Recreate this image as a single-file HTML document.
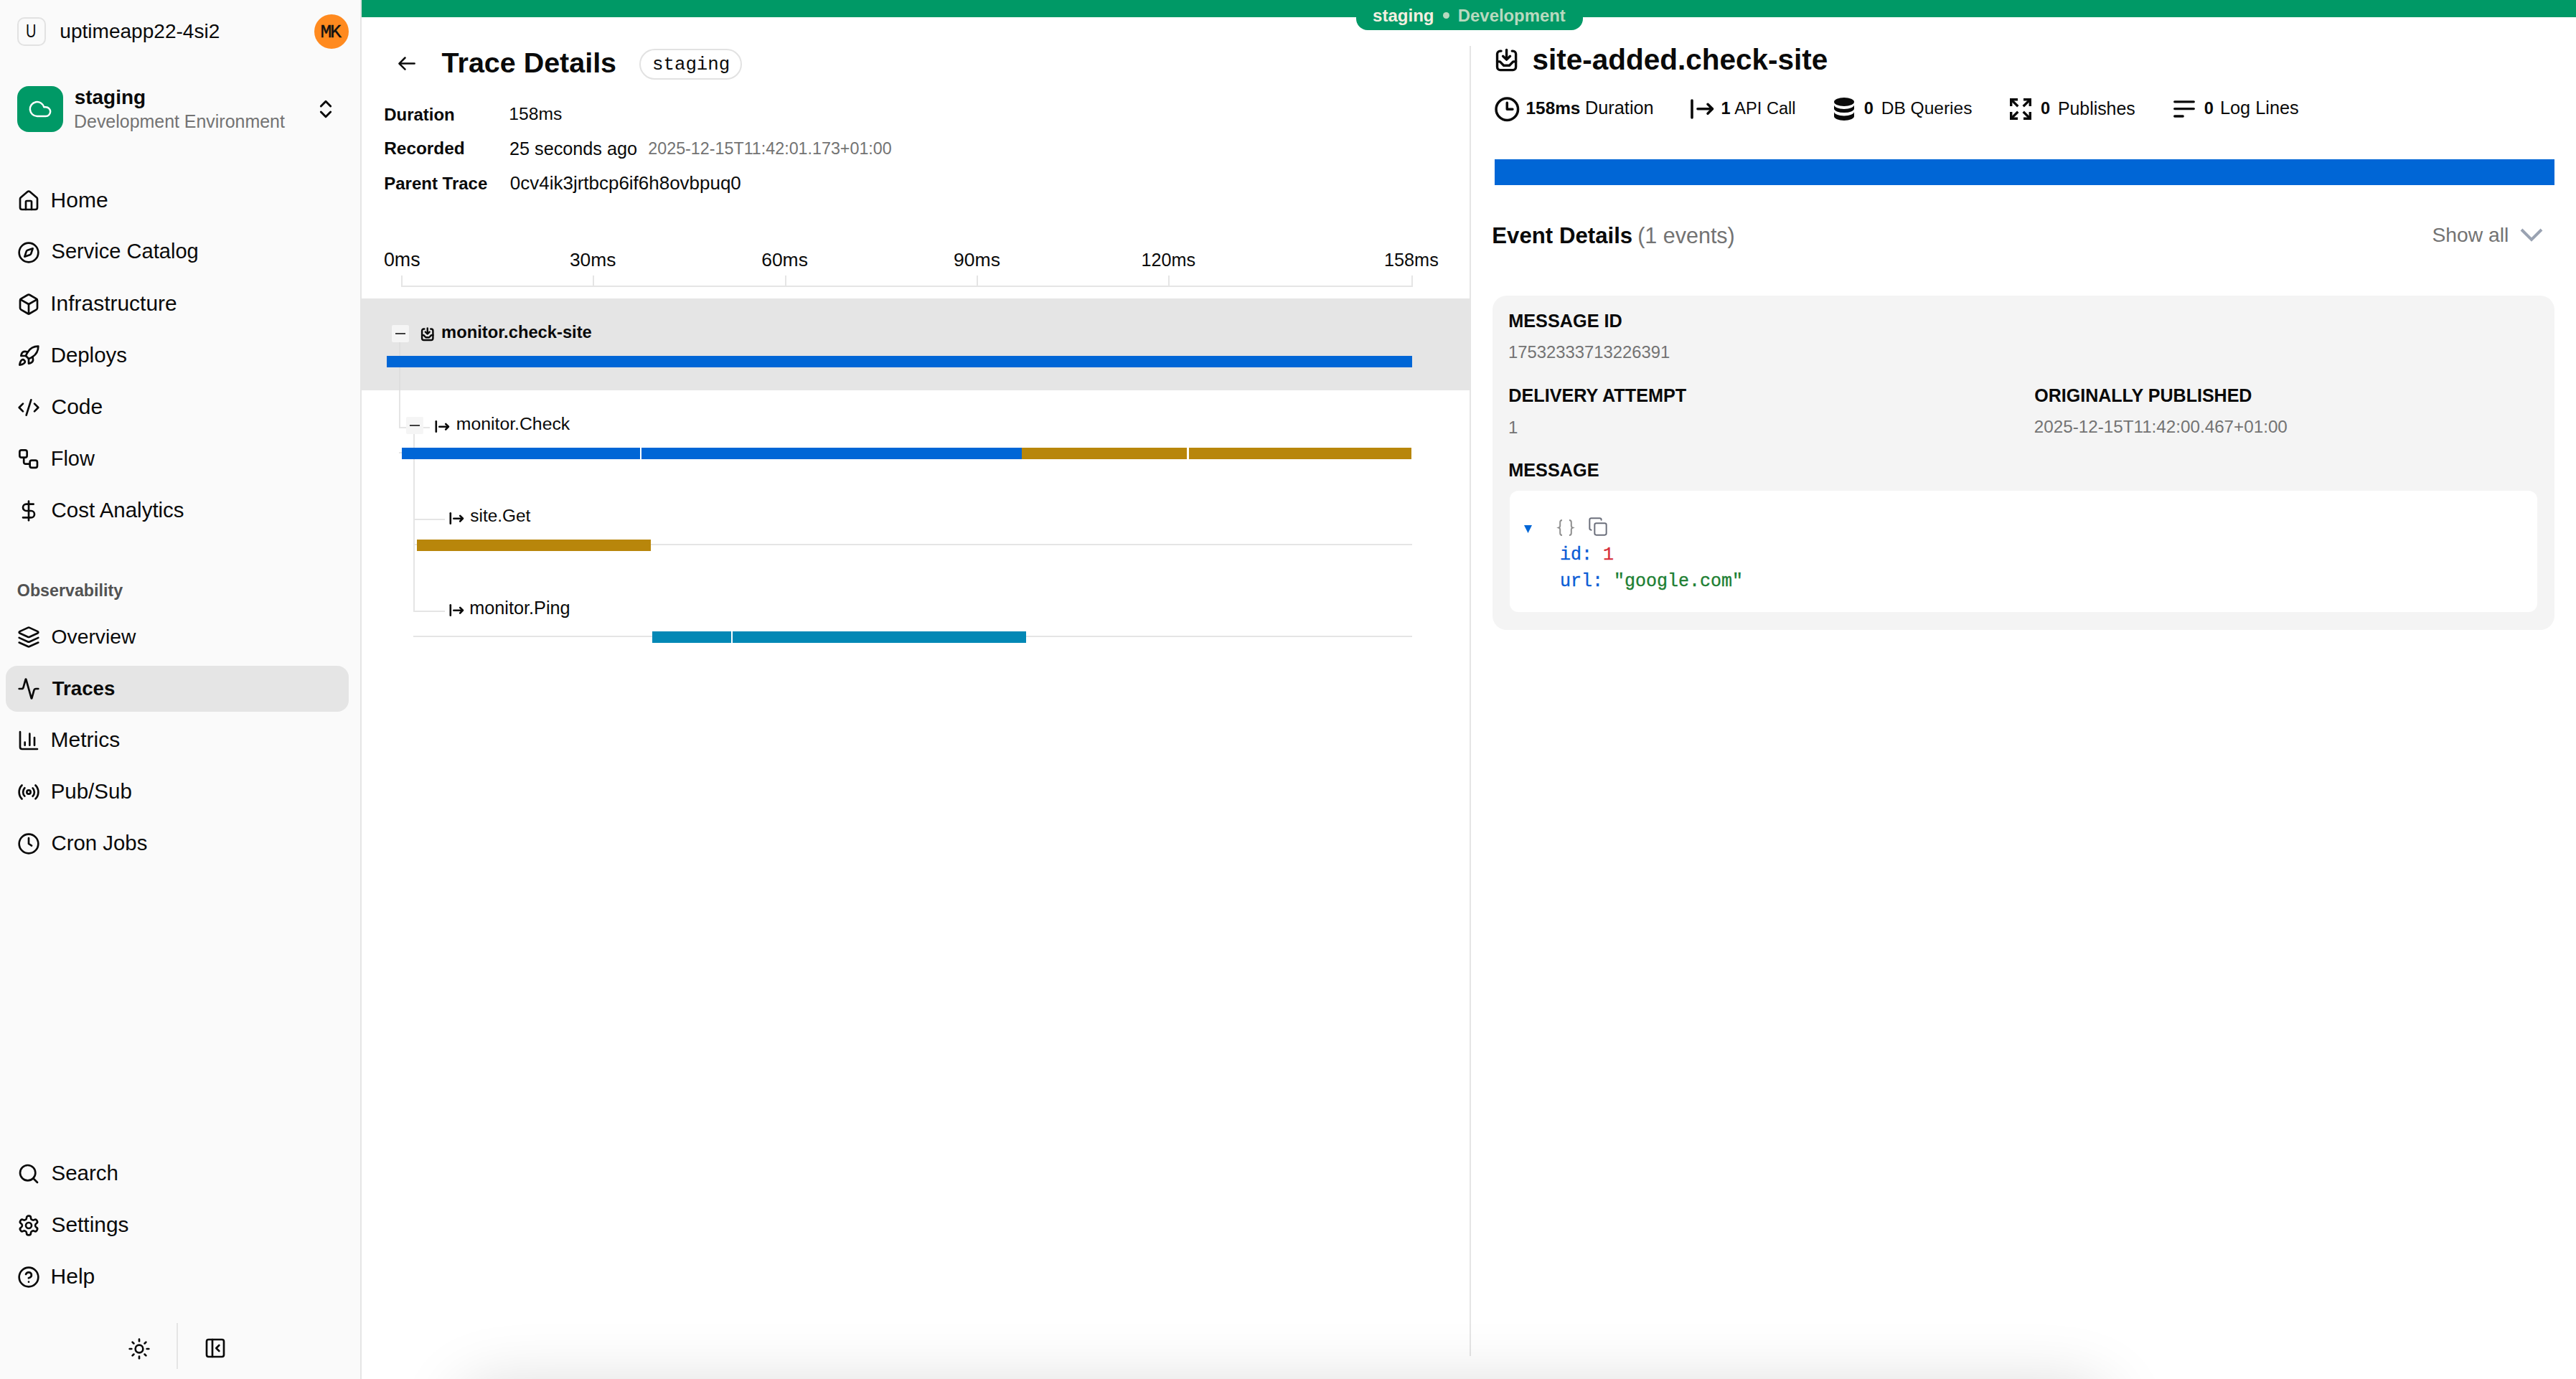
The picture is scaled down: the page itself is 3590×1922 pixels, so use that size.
<!DOCTYPE html>
<html><head><meta charset="utf-8"><title>Trace Details</title>
<style>
html,body{margin:0;padding:0;width:3590px;height:1922px;overflow:hidden;background:#fff;}
.t{position:absolute;white-space:pre;}
.r{position:absolute;}
.i{position:absolute;overflow:visible;}
</style></head><body>
<div style="position:relative;width:3590px;height:1922px;overflow:hidden;background:#fff">
<div class="r" style="left:0px;top:0px;width:502px;height:1922px;background:#fafafa;"></div>
<div class="r" style="left:502px;top:0px;width:2px;height:1922px;background:#e5e5e5;"></div>
<div class="r" style="left:24px;top:24px;width:40px;height:40px;background:#fafafa;box-sizing:border-box;border:2px solid #e2e2e2;border-radius:10px;"></div>
<div class="t" style="left:36.3px;top:31.17px;font:400 25px/25px 'Liberation Sans', sans-serif;color:#0a0a0a;transform:scaleX(0.8);transform-origin:0 0;">U</div>
<div class="t" style="left:83.32px;top:29.79px;font:400 28.06px/28.06px 'Liberation Sans', sans-serif;color:#0a0a0a;">uptimeapp22-4si2</div>
<div class="r" style="left:438px;top:20px;width:48px;height:48px;background:#ff8a1f;border-radius:50%;"></div>
<div class="t" style="left:446.5px;top:31.73px;font:400 26.5px/26.5px 'Liberation Mono', monospace;color:#111111;letter-spacing:-2.3px;-webkit-text-stroke:0.4px #111;">MK</div>
<div class="r" style="left:24px;top:120px;width:64px;height:64px;background:#009966;border-radius:16px;"></div>
<svg class="i" style="left:39px;top:135px;" width="34" height="34" viewBox="0 0 24 24" fill="none" stroke="#fff" stroke-width="1.75" stroke-linecap="round" stroke-linejoin="round"><path d="M17.5 19H9a7 7 0 1 1 6.71-9h1.79a4.5 4.5 0 1 1 0 9Z"/></svg>
<div class="t" style="left:103.63px;top:121.96px;font:700 27.97px/27.97px 'Liberation Sans', sans-serif;color:#0a0a0a;">staging</div>
<div class="t" style="left:103.00px;top:157.02px;font:400 24.95px/24.95px 'Liberation Sans', sans-serif;color:#737373;">Development Environment</div>
<svg class="i" style="left:438px;top:136px;" width="32" height="32" viewBox="0 0 24 24" fill="none" stroke="#0a0a0a" stroke-width="2.2" stroke-linecap="round" stroke-linejoin="round"><path d="m7 15 5 5 5-5"/><path d="m7 9 5-5 5 5"/></svg>
<svg class="i" style="left:24px;top:264px;" width="32" height="32" viewBox="0 0 24 24" fill="none" stroke="#0a0a0a" stroke-width="2" stroke-linecap="round" stroke-linejoin="round"><path d="M15 21v-8a1 1 0 0 0-1-1h-4a1 1 0 0 0-1 1v8"/><path d="M3 10a2 2 0 0 1 .709-1.528l7-5.999a2 2 0 0 1 2.582 0l7 5.999A2 2 0 0 1 21 10v9a2 2 0 0 1-2 2H5a2 2 0 0 1-2-2z"/></svg>
<div class="t" style="left:70.60px;top:263.65px;font:400 30.00px/30.00px 'Liberation Sans', sans-serif;color:#0a0a0a;">Home</div>
<svg class="i" style="left:24px;top:336px;" width="32" height="32" viewBox="0 0 24 24" fill="none" stroke="#0a0a0a" stroke-width="2" stroke-linecap="round" stroke-linejoin="round"><circle cx="12" cy="12" r="10"/><path d="m16.24 7.76-1.804 5.411a2 2 0 0 1-1.265 1.265L7.76 16.24l1.804-5.411a2 2 0 0 1 1.265-1.265z"/></svg>
<div class="t" style="left:71.55px;top:336.44px;font:400 29.07px/29.07px 'Liberation Sans', sans-serif;color:#0a0a0a;">Service Catalog</div>
<svg class="i" style="left:24px;top:408px;" width="32" height="32" viewBox="0 0 24 24" fill="none" stroke="#0a0a0a" stroke-width="2" stroke-linecap="round" stroke-linejoin="round"><path d="M21 8a2 2 0 0 0-1-1.73l-7-4a2 2 0 0 0-2 0l-7 4A2 2 0 0 0 3 8v8a2 2 0 0 0 1 1.73l7 4a2 2 0 0 0 2 0l7-4A2 2 0 0 0 21 16Z"/><path d="m3.3 7 8.7 5 8.7-5"/><path d="M12 22V12"/></svg>
<div class="t" style="left:70.30px;top:407.69px;font:400 29.95px/29.95px 'Liberation Sans', sans-serif;color:#0a0a0a;">Infrastructure</div>
<svg class="i" style="left:24px;top:480px;" width="32" height="32" viewBox="0 0 24 24" fill="none" stroke="#0a0a0a" stroke-width="2" stroke-linecap="round" stroke-linejoin="round"><path d="M4.5 16.5c-1.5 1.26-2 5-2 5s3.74-.5 5-2c.71-.84.7-2.13-.09-2.91a2.18 2.18 0 0 0-2.91-.09z"/><path d="m12 15-3-3a22 22 0 0 1 2-3.95A12.88 12.88 0 0 1 22 2c0 2.72-.78 7.5-6 11a22.35 22.35 0 0 1-4 2z"/><path d="M9 12H4s.55-3.03 2-4c1.62-1.08 5 0 5 0"/><path d="M12 15v5s3.03-.55 4-2c1.08-1.62 0-5 0-5"/></svg>
<div class="t" style="left:70.65px;top:480.13px;font:400 29.43px/29.43px 'Liberation Sans', sans-serif;color:#0a0a0a;">Deploys</div>
<svg class="i" style="left:24px;top:552px;" width="32" height="32" viewBox="0 0 24 24" fill="none" stroke="#0a0a0a" stroke-width="2" stroke-linecap="round" stroke-linejoin="round"><path d="m18 16 4-4-4-4"/><path d="m6 8-4 4 4 4"/><path d="m14.5 4-5 16"/></svg>
<div class="t" style="left:71.50px;top:551.65px;font:400 30.00px/30.00px 'Liberation Sans', sans-serif;color:#0a0a0a;">Code</div>
<svg class="i" style="left:26px;top:626px;" width="28" height="28" viewBox="0 0 28 28"><g fill="none" stroke="#0a0a0a" stroke-width="2.7" stroke-linecap="round" stroke-linejoin="round"><rect x="1.35" y="1.35" width="10.3" height="10.3" rx="2.6"/><rect x="15.65" y="15.55" width="10.3" height="10.3" rx="2.6"/><path d="M7.2 12V18.2a2.5 2.5 0 0 0 2.5 2.5H15.6"/></g></svg>
<div class="t" style="left:70.68px;top:624.50px;font:400 29.00px/29.00px 'Liberation Sans', sans-serif;color:#0a0a0a;">Flow</div>
<svg class="i" style="left:24px;top:696px;" width="32" height="32" viewBox="0 0 24 24" fill="none" stroke="#0a0a0a" stroke-width="2" stroke-linecap="round" stroke-linejoin="round"><line x1="12" x2="12" y1="2" y2="22"/><path d="M17 5H9.5a3.5 3.5 0 0 0 0 7h5a3.5 3.5 0 0 1 0 7H6"/></svg>
<div class="t" style="left:71.53px;top:696.09px;font:400 29.48px/29.48px 'Liberation Sans', sans-serif;color:#0a0a0a;">Cost Analytics</div>
<div class="t" style="left:23.82px;top:812.35px;font:700 23.25px/23.25px 'Liberation Sans', sans-serif;color:#525252;">Observability</div>
<div class="r" style="left:8px;top:928px;width:478px;height:64px;background:#e5e5e5;border-radius:16px;"></div>
<svg class="i" style="left:24px;top:872px;" width="32" height="32" viewBox="0 0 24 24" fill="none" stroke="#0a0a0a" stroke-width="2" stroke-linecap="round" stroke-linejoin="round"><path d="m12.83 2.18a2 2 0 0 0-1.66 0L2.6 6.08a1 1 0 0 0 0 1.83l8.58 3.91a2 2 0 0 0 1.66 0l8.58-3.9a1 1 0 0 0 0-1.83Z"/><path d="m22 17.65-9.17 4.16a2 2 0 0 1-1.66 0L2 17.65"/><path d="m22 12.65-9.17 4.16a2 2 0 0 1-1.66 0L2 12.65"/></svg>
<div class="t" style="left:71.59px;top:873.13px;font:400 28.25px/28.25px 'Liberation Sans', sans-serif;color:#0a0a0a;">Overview</div>
<svg class="i" style="left:24px;top:944px;" width="32" height="32" viewBox="0 0 24 24" fill="none" stroke="#0a0a0a" stroke-width="2" stroke-linecap="round" stroke-linejoin="round"><path d="M22 12h-2.48a2 2 0 0 0-1.93 1.46l-2.35 8.36a.25.25 0 0 1-.48 0L9.24 2.18a.25.25 0 0 0-.48 0l-2.35 8.36A2 2 0 0 1 4.49 12H2"/></svg>
<div class="t" style="left:72.72px;top:945.64px;font:700 27.64px/27.64px 'Liberation Sans', sans-serif;color:#0a0a0a;">Traces</div>
<svg class="i" style="left:24px;top:1016px;" width="32" height="32" viewBox="0 0 24 24" fill="none" stroke="#0a0a0a" stroke-width="2" stroke-linecap="round" stroke-linejoin="round"><path d="M3 3v16a2 2 0 0 0 2 2h16"/><path d="M18 17V9"/><path d="M13 17V5"/><path d="M8 17v-3"/></svg>
<div class="t" style="left:70.60px;top:1015.65px;font:400 30.00px/30.00px 'Liberation Sans', sans-serif;color:#0a0a0a;">Metrics</div>
<svg class="i" style="left:24px;top:1088px;" width="32" height="32" viewBox="0 0 24 24" fill="none" stroke="#0a0a0a" stroke-width="2" stroke-linecap="round" stroke-linejoin="round"><path d="M4.9 19.1C1 15.2 1 8.8 4.9 4.9"/><path d="M7.8 16.2c-2.3-2.3-2.3-6.1 0-8.5"/><circle cx="12" cy="12" r="2"/><path d="M16.2 7.8c2.3 2.3 2.3 6.1 0 8.5"/><path d="M19.1 4.9C23 8.8 23 15.1 19.1 19"/></svg>
<div class="t" style="left:70.64px;top:1088.06px;font:400 29.51px/29.51px 'Liberation Sans', sans-serif;color:#0a0a0a;">Pub/Sub</div>
<svg class="i" style="left:24px;top:1160px;" width="32" height="32" viewBox="0 0 24 24" fill="none" stroke="#0a0a0a" stroke-width="2" stroke-linecap="round" stroke-linejoin="round"><circle cx="12" cy="12" r="10"/><polyline points="12 6 12 12 15 14"/></svg>
<div class="t" style="left:71.53px;top:1160.19px;font:400 29.36px/29.36px 'Liberation Sans', sans-serif;color:#0a0a0a;">Cron Jobs</div>
<svg class="i" style="left:24px;top:1620px;" width="32" height="32" viewBox="0 0 24 24" fill="none" stroke="#0a0a0a" stroke-width="2" stroke-linecap="round" stroke-linejoin="round"><circle cx="11" cy="11" r="8"/><path d="m21 21-4.3-4.3"/></svg>
<div class="t" style="left:71.52px;top:1620.07px;font:400 29.51px/29.51px 'Liberation Sans', sans-serif;color:#0a0a0a;">Search</div>
<svg class="i" style="left:24px;top:1692px;" width="32" height="32" viewBox="0 0 24 24" fill="none" stroke="#0a0a0a" stroke-width="2" stroke-linecap="round" stroke-linejoin="round"><path d="M12.22 2h-.44a2 2 0 0 0-2 2v.18a2 2 0 0 1-1 1.73l-.43.25a2 2 0 0 1-2 0l-.15-.08a2 2 0 0 0-2.73.73l-.22.38a2 2 0 0 0 .73 2.73l.15.1a2 2 0 0 1 1 1.72v.51a2 2 0 0 1-1 1.74l-.15.09a2 2 0 0 0-.73 2.73l.22.38a2 2 0 0 0 2.73.73l.15-.08a2 2 0 0 1 2 0l.43.25a2 2 0 0 1 1 1.73V20a2 2 0 0 0 2 2h.44a2 2 0 0 0 2-2v-.18a2 2 0 0 1 1-1.73l.43-.25a2 2 0 0 1 2 0l.15.08a2 2 0 0 0 2.73-.73l.22-.39a2 2 0 0 0-.73-2.73l-.15-.08a2 2 0 0 1-1-1.74v-.5a2 2 0 0 1 1-1.74l.15-.09a2 2 0 0 0 .73-2.73l-.22-.38a2 2 0 0 0-2.73-.73l-.15.08a2 2 0 0 1-2 0l-.43-.25a2 2 0 0 1-1-1.73V4a2 2 0 0 0-2-2z"/><circle cx="12" cy="12" r="3"/></svg>
<div class="t" style="left:71.51px;top:1691.75px;font:400 29.89px/29.89px 'Liberation Sans', sans-serif;color:#0a0a0a;">Settings</div>
<svg class="i" style="left:24px;top:1764px;" width="32" height="32" viewBox="0 0 24 24" fill="none" stroke="#0a0a0a" stroke-width="2" stroke-linecap="round" stroke-linejoin="round"><circle cx="12" cy="12" r="10"/><path d="M9.09 9a3 3 0 0 1 5.83 1c0 2-3 3-3 3"/><path d="M12 17h.01"/></svg>
<div class="t" style="left:70.60px;top:1763.65px;font:400 30.00px/30.00px 'Liberation Sans', sans-serif;color:#0a0a0a;">Help</div>
<svg class="i" style="left:178px;top:1864px;" width="32" height="32" viewBox="0 0 24 24" fill="none" stroke="#0a0a0a" stroke-width="2" stroke-linecap="round" stroke-linejoin="round"><circle cx="12" cy="12" r="4"/><path d="M12 2v2"/><path d="M12 20v2"/><path d="m4.93 4.93 1.41 1.41"/><path d="m17.66 17.66 1.41 1.41"/><path d="M2 12h2"/><path d="M20 12h2"/><path d="m6.34 17.66-1.41 1.41"/><path d="m19.07 4.93-1.41 1.41"/></svg>
<div class="r" style="left:246px;top:1844px;width:2px;height:64px;background:#e5e5e5;"></div>
<svg class="i" style="left:284px;top:1863px;" width="32" height="32" viewBox="0 0 24 24" fill="none" stroke="#0a0a0a" stroke-width="2" stroke-linecap="round" stroke-linejoin="round"><rect width="18" height="18" x="3" y="3" rx="2"/><path d="M9 3v18"/><path d="m16 15-3-3 3-3"/></svg>
<div class="r" style="left:504px;top:0px;width:3086px;height:1922px;background:#ffffff;"></div>
<div class="r" style="left:504px;top:0px;width:3086px;height:24px;background:#009966;"></div>
<div class="r" style="left:1890px;top:0px;width:316px;height:42px;background:#009966;border-radius:0 0 16px 16px;"></div>
<div class="t" style="left:1913.04px;top:10.17px;font:700 24.06px/24.06px 'Liberation Sans', sans-serif;color:#f3efe0;">staging</div>
<div class="r" style="left:2011px;top:17px;width:9px;height:9px;background:#b6d9bf;border-radius:50%;"></div>
<div class="t" style="left:2031.83px;top:10.32px;font:700 23.89px/23.89px 'Liberation Sans', sans-serif;color:#b9d9bf;">Development</div>
<svg class="i" style="left:553px;top:76px;" width="28" height="26" viewBox="0 0 28 26"><g fill="none" stroke="#0a0a0a" stroke-width="2.5" stroke-linecap="round" stroke-linejoin="round"><path d="M4.4 12.6H24.6"/><path d="M11.5 4.5 3.4 12.6 11.5 20.7"/></g></svg>
<div class="t" style="left:615.61px;top:67.66px;font:700 39.46px/39.46px 'Liberation Sans', sans-serif;color:#0a0a0a;">Trace Details</div>
<div class="r" style="left:891px;top:68px;width:143px;height:43px;background:#fff;box-sizing:border-box;border:2px solid #e2e2e2;border-radius:22px;"></div>
<div class="t" style="left:908.94px;top:78.26px;font:400 25.81px/25.81px 'Liberation Mono', monospace;color:#0a0a0a;">staging</div>
<div class="t" style="left:535.22px;top:147.86px;font:700 23.96px/23.96px 'Liberation Sans', sans-serif;color:#0a0a0a;">Duration</div>
<div class="t" style="left:709.28px;top:147.27px;font:400 24.65px/24.65px 'Liberation Sans', sans-serif;color:#0a0a0a;">158ms</div>
<div class="t" style="left:535.19px;top:195.37px;font:700 24.41px/24.41px 'Liberation Sans', sans-serif;color:#0a0a0a;">Recorded</div>
<div class="t" style="left:709.99px;top:194.69px;font:400 25.22px/25.22px 'Liberation Sans', sans-serif;color:#0a0a0a;">25 seconds ago</div>
<div class="t" style="left:903.34px;top:196.32px;font:400 23.29px/23.29px 'Liberation Sans', sans-serif;color:#737373;">2025-12-15T11:42:01.173+01:00</div>
<div class="t" style="left:535.22px;top:243.82px;font:700 24.00px/24.00px 'Liberation Sans', sans-serif;color:#0a0a0a;">Parent Trace</div>
<div class="t" style="left:710.86px;top:242.15px;font:400 25.98px/25.98px 'Liberation Sans', sans-serif;color:#0a0a0a;">0cv4ik3jrtbcp6if6h8ovbpuq0</div>
<div class="r" style="left:559px;top:398px;width:1410px;height:2px;background:#e5e5e5;"></div>
<div class="r" style="left:559px;top:384px;width:2px;height:15px;background:#e5e5e5;"></div>
<div class="t" style="left:534.93px;top:348.86px;font:400 26.80px/26.80px 'Liberation Sans', sans-serif;color:#0a0a0a;">0ms</div>
<div class="r" style="left:826px;top:384px;width:2px;height:15px;background:#e5e5e5;"></div>
<div class="t" style="left:793.95px;top:349.22px;font:400 26.37px/26.37px 'Liberation Sans', sans-serif;color:#0a0a0a;">30ms</div>
<div class="r" style="left:1094px;top:384px;width:2px;height:15px;background:#e5e5e5;"></div>
<div class="t" style="left:1061.18px;top:349.12px;font:400 26.48px/26.48px 'Liberation Sans', sans-serif;color:#0a0a0a;">60ms</div>
<div class="r" style="left:1361px;top:384px;width:2px;height:15px;background:#e5e5e5;"></div>
<div class="t" style="left:1329.07px;top:349.09px;font:400 26.53px/26.53px 'Liberation Sans', sans-serif;color:#0a0a0a;">90ms</div>
<div class="r" style="left:1628px;top:384px;width:2px;height:15px;background:#e5e5e5;"></div>
<div class="t" style="left:1590.49px;top:350.24px;font:400 25.16px/25.16px 'Liberation Sans', sans-serif;color:#0a0a0a;">120ms</div>
<div class="r" style="left:1967px;top:384px;width:2px;height:15px;background:#e5e5e5;"></div>
<div class="t" style="left:1928.98px;top:350.16px;font:400 25.26px/25.26px 'Liberation Sans', sans-serif;color:#0a0a0a;">158ms</div>
<div class="r" style="left:504px;top:416px;width:1545px;height:128px;background:#e5e5e5;"></div>
<div class="r" style="left:556px;top:477px;width:2px;height:120px;background:#e5e5e5;"></div>
<div class="r" style="left:556px;top:477px;width:2px;height:67px;background:#dedede;"></div>
<div class="r" style="left:556px;top:595px;width:43px;height:2px;background:#e5e5e5;"></div>
<div class="r" style="left:576px;top:605px;width:2px;height:248px;background:#e5e5e5;"></div>
<div class="r" style="left:576px;top:723px;width:44px;height:2px;background:#e5e5e5;"></div>
<div class="r" style="left:576px;top:851px;width:44px;height:2px;background:#e5e5e5;"></div>
<div class="r" style="left:546px;top:453px;width:24px;height:24px;background:#f5f5f5;border-radius:2px;"></div>
<div class="r" style="left:551px;top:464px;width:14px;height:2px;background:#404040;"></div>
<div class="r" style="left:566px;top:581px;width:24px;height:24px;background:#f5f5f5;border-radius:2px;"></div>
<div class="r" style="left:571px;top:592px;width:14px;height:2px;background:#404040;"></div>
<svg class="i" style="left:586.3px;top:455.5px;" width="20" height="20" viewBox="0 0 24 24" fill="none" stroke="#0a0a0a" stroke-width="2.9" stroke-linecap="round" stroke-linejoin="round"><path d="M6.4 2.9H5.5a3 3 0 0 0-3 3V18.6a3 3 0 0 0 3 3H17.9a3 3 0 0 0 3-3V5.9a3 3 0 0 0-3-3H17.1"/><path d="M11.7 1.8V10.6"/><path d="M8.2 7.9 11.7 11.4 15.2 7.9"/><path d="M2.5 13.3H5.2L8.9 17.1H14.5L18.2 13.3H20.9"/></svg>
<div class="t" style="left:615.09px;top:452.44px;font:700 23.74px/23.74px 'Liberation Sans', sans-serif;color:#0a0a0a;">monitor.check-site</div>
<div class="r" style="left:539px;top:496px;width:1429px;height:16px;background:#0066d6;"></div>
<svg class="i" style="left:605px;top:584.5px;" width="24" height="20" viewBox="0 0 24 20"><g fill="none" stroke="#0a0a0a" stroke-width="2.6" stroke-linecap="round" stroke-linejoin="round"><path d="M2.8 2.3V16.8"/><path d="M7.3 9.7H19.6"/><path d="M16.2 5.9 20 9.7 16.2 13.5"/></g></svg>
<div class="t" style="left:635.76px;top:579.04px;font:400 24.80px/24.80px 'Liberation Sans', sans-serif;color:#0a0a0a;">monitor.Check</div>
<div class="r" style="left:556px;top:630px;width:4px;height:2px;background:#e5e5e5;"></div>
<div class="r" style="left:560px;top:624px;width:1407px;height:16px;background:#0066d6;"></div>
<div class="r" style="left:892px;top:624px;width:2px;height:16px;background:#ffffff;"></div>
<div class="r" style="left:1424px;top:624px;width:543px;height:16px;background:#b8860b;"></div>
<div class="r" style="left:1654px;top:624px;width:3px;height:16px;background:#ffffff;"></div>
<svg class="i" style="left:625px;top:712.5px;" width="24" height="20" viewBox="0 0 24 20"><g fill="none" stroke="#0a0a0a" stroke-width="2.6" stroke-linecap="round" stroke-linejoin="round"><path d="M2.8 2.3V16.8"/><path d="M7.3 9.7H19.6"/><path d="M16.2 5.9 20 9.7 16.2 13.5"/></g></svg>
<div class="t" style="left:655.27px;top:707.37px;font:400 24.41px/24.41px 'Liberation Sans', sans-serif;color:#0a0a0a;">site.Get</div>
<div class="r" style="left:577px;top:758px;width:1391px;height:2px;background:#e5e5e5;"></div>
<div class="r" style="left:581px;top:752px;width:326px;height:16px;background:#b8860b;"></div>
<svg class="i" style="left:625px;top:840.5px;" width="24" height="20" viewBox="0 0 24 20"><g fill="none" stroke="#0a0a0a" stroke-width="2.6" stroke-linecap="round" stroke-linejoin="round"><path d="M2.8 2.3V16.8"/><path d="M7.3 9.7H19.6"/><path d="M16.2 5.9 20 9.7 16.2 13.5"/></g></svg>
<div class="t" style="left:654.23px;top:834.64px;font:400 25.28px/25.28px 'Liberation Sans', sans-serif;color:#0a0a0a;">monitor.Ping</div>
<div class="r" style="left:576px;top:886px;width:1392px;height:2px;background:#e5e5e5;"></div>
<div class="r" style="left:909px;top:880px;width:521px;height:16px;background:#0288b5;"></div>
<div class="r" style="left:1019px;top:880px;width:2px;height:16px;background:#ffffff;"></div>
<div class="r" style="left:2048px;top:64px;width:2px;height:1826px;background:#e5e5e5;"></div>
<svg class="i" style="left:2083.4px;top:66.5px;" width="34" height="34" viewBox="0 0 24 24" fill="none" stroke="#0a0a0a" stroke-width="2.4" stroke-linecap="round" stroke-linejoin="round"><path d="M6.4 2.9H5.5a3 3 0 0 0-3 3V18.6a3 3 0 0 0 3 3H17.9a3 3 0 0 0 3-3V5.9a3 3 0 0 0-3-3H17.1"/><path d="M11.7 1.8V10.6"/><path d="M8.2 7.9 11.7 11.4 15.2 7.9"/><path d="M2.5 13.3H5.2L8.9 17.1H14.5L18.2 13.3H20.9"/></svg>
<div class="t" style="left:2135.38px;top:63.03px;font:700 40.50px/40.50px 'Liberation Sans', sans-serif;color:#0a0a0a;">site-added.check-site</div>
<svg class="i" style="left:2081.7px;top:133.7px;" width="36.6" height="36.6" viewBox="0 0 24 24" fill="none" stroke="#0a0a0a" stroke-width="2.3" stroke-linecap="round" stroke-linejoin="round"><circle cx="12" cy="12" r="10"/><polyline points="12 6 12 12 17 12"/></svg>
<div class="t" style="left:2126.54px;top:139.19px;font:700 24.39px/24.39px 'Liberation Sans', sans-serif;color:#0a0a0a;">158ms</div>
<div class="t" style="left:2208.97px;top:138.38px;font:400 25.34px/25.34px 'Liberation Sans', sans-serif;color:#0a0a0a;">Duration</div>
<svg class="i" style="left:2354px;top:136px;" width="36" height="32" viewBox="0 0 36 32"><g fill="none" stroke="#0a0a0a" stroke-width="3.6" stroke-linecap="round" stroke-linejoin="round"><path d="M4 4V28"/><path d="M12 15.8H32"/><path d="M26 9.3 32.5 15.8 26 22.3"/></g></svg>
<div class="t" style="left:2398.58px;top:139.86px;font:700 23.60px/23.60px 'Liberation Sans', sans-serif;color:#0a0a0a;">1</div>
<div class="t" style="left:2417.30px;top:139.85px;font:400 23.61px/23.61px 'Liberation Sans', sans-serif;color:#0a0a0a;">API Call</div>
<svg class="i" style="left:2556px;top:136px;" width="28" height="32" viewBox="0 0 28 32"><g fill="#0a0a0a"><ellipse cx="14" cy="6" rx="14" ry="6"/><path d="M0 10A14 6 0 0 0 28 10V15.5A14 5.5 0 0 1 0 15.5Z"/><path d="M0 19.8A14 5.6 0 0 0 28 19.8V26A14 6 0 0 1 0 26Z"/></g></svg>
<div class="t" style="left:2597.81px;top:139.86px;font:700 23.60px/23.60px 'Liberation Sans', sans-serif;color:#0a0a0a;">0</div>
<div class="t" style="left:2621.79px;top:139.09px;font:400 24.50px/24.50px 'Liberation Sans', sans-serif;color:#0a0a0a;">DB Queries</div>
<svg class="i" style="left:2801px;top:137px;" width="30" height="30" viewBox="0 0 30 30"><g fill="none" stroke="#0a0a0a" stroke-width="3.4" stroke-linecap="butt" stroke-linejoin="miter"><path d="M1.7 11V1.7H11"/><path d="M2.6 2.6 11.3 11.3"/><path d="M19 1.7H28.3V11"/><path d="M27.4 2.6 18.7 11.3"/><path d="M1.7 19V28.3H11"/><path d="M2.6 27.4 11.3 18.7"/><path d="M19 28.3H28.3V19"/><path d="M27.4 27.4 18.7 18.7"/></g></svg>
<div class="t" style="left:2844.06px;top:139.86px;font:700 23.60px/23.60px 'Liberation Sans', sans-serif;color:#0a0a0a;">0</div>
<div class="t" style="left:2867.91px;top:138.80px;font:400 24.86px/24.86px 'Liberation Sans', sans-serif;color:#0a0a0a;">Publishes</div>
<svg class="i" style="left:3028px;top:138px;" width="32" height="26" viewBox="0 0 32 26"><g fill="none" stroke="#0a0a0a" stroke-width="3.3" stroke-linecap="round"><path d="M2.7 3.8H29.3"/><path d="M2.7 13.6H29.3"/><path d="M2.7 24H14.2"/></g></svg>
<div class="t" style="left:3071.76px;top:139.86px;font:700 23.60px/23.60px 'Liberation Sans', sans-serif;color:#0a0a0a;">0</div>
<div class="t" style="left:3093.98px;top:138.41px;font:400 25.31px/25.31px 'Liberation Sans', sans-serif;color:#0a0a0a;">Log Lines</div>
<div class="r" style="left:2083px;top:222px;width:1477px;height:36px;background:#0066d6;"></div>
<div class="t" style="left:2079.32px;top:312.64px;font:700 31.20px/31.20px 'Liberation Sans', sans-serif;color:#0a0a0a;">Event Details</div>
<div class="t" style="left:2282.17px;top:313.23px;font:400 30.50px/30.50px 'Liberation Sans', sans-serif;color:#737373;">(1 events)</div>
<div class="t" style="left:3389.39px;top:312.80px;font:400 28.28px/28.28px 'Liberation Sans', sans-serif;color:#737373;">Show all</div>
<svg class="i" style="left:3512px;top:318px;" width="32" height="20" viewBox="0 0 32 20"><path d="M2 2 16 16 30 2" fill="none" stroke="#9aa3b2" stroke-width="4" stroke-linecap="butt" stroke-linejoin="miter"/></svg>
<div class="r" style="left:2080px;top:412px;width:1480px;height:466px;background:#f4f4f4;border-radius:20px;"></div>
<div class="t" style="left:2102.23px;top:434.64px;font:700 25.28px/25.28px 'Liberation Sans', sans-serif;color:#0a0a0a;">MESSAGE ID</div>
<div class="t" style="left:2102.09px;top:479.37px;font:400 23.82px/23.82px 'Liberation Sans', sans-serif;color:#737373;">17532333713226391</div>
<div class="t" style="left:2102.23px;top:538.68px;font:700 25.23px/25.23px 'Liberation Sans', sans-serif;color:#0a0a0a;">DELIVERY ATTEMPT</div>
<div class="t" style="left:2102.08px;top:583.72px;font:400 24.00px/24.00px 'Liberation Sans', sans-serif;color:#737373;">1</div>
<div class="t" style="left:2835.25px;top:538.84px;font:700 25.04px/25.04px 'Liberation Sans', sans-serif;color:#0a0a0a;">ORIGINALLY PUBLISHED</div>
<div class="t" style="left:2834.79px;top:583.28px;font:400 24.22px/24.22px 'Liberation Sans', sans-serif;color:#737373;">2025-12-15T11:42:00.467+01:00</div>
<div class="t" style="left:2102.23px;top:642.66px;font:700 25.26px/25.26px 'Liberation Sans', sans-serif;color:#0a0a0a;">MESSAGE</div>
<div class="r" style="left:2104px;top:684px;width:1432px;height:169px;background:#ffffff;border-radius:12px;"></div>
<svg class="i" style="left:2124px;top:732px;" width="11" height="11" viewBox="0 0 11 11"><path d="M0 0H11L5.5 11Z" fill="#0066d6"/></svg>
<svg class="i" style="left:2170px;top:723px;" width="26" height="24" viewBox="0 0 26 24"><g fill="none" stroke="#8f8f8f" stroke-width="2" stroke-linecap="butt"><path d="M7 2C4.8 2 4.2 3 4.2 5V10.2C4.2 11.5 3.6 12 2.2 12.5C3.6 13 4.2 13.5 4.2 14.8V20C4.2 22 4.8 23 7 23"/><path d="M17 2C19.2 2 19.8 3 19.8 5V10.2C19.8 11.5 20.4 12 21.8 12.5C20.4 13 19.8 13.5 19.8 14.8V20C19.8 22 19.2 23 17 23"/></g></svg>
<svg class="i" style="left:2213px;top:719.7px;" width="28" height="28" viewBox="0 0 24 24" fill="none" stroke="#6b6f7b" stroke-width="1.7" stroke-linecap="round" stroke-linejoin="round"><rect width="14" height="14" x="8" y="8" rx="2" ry="2"/><path d="M4 16c-1.1 0-2-.9-2-2V4c0-1.1.9-2 2-2h10c1.1 0 2 .9 2 2"/></svg>
<div class="t" style="left:2174px;top:760.88px;font:400 25px/25px 'Liberation Mono', monospace;color:#0a0a0a;-webkit-text-stroke:0.35px currentColor;"><span style="color:#0b5cd5">id:</span> <span style="color:#d62e3a">1</span></div>
<div class="t" style="left:2174px;top:798.38px;font:400 25px/25px 'Liberation Mono', monospace;color:#0a0a0a;-webkit-text-stroke:0.35px currentColor;"><span style="color:#0b5cd5">url:</span> <span style="color:#1d7f33">"google.com"</span></div>
<div class="r" style="left:650px;top:1942px;width:2280px;height:80px;background:#fff;border-radius:40px;box-shadow:0 0 90px 12px rgba(0,0,0,0.15);"></div>
</div>
</body></html>
